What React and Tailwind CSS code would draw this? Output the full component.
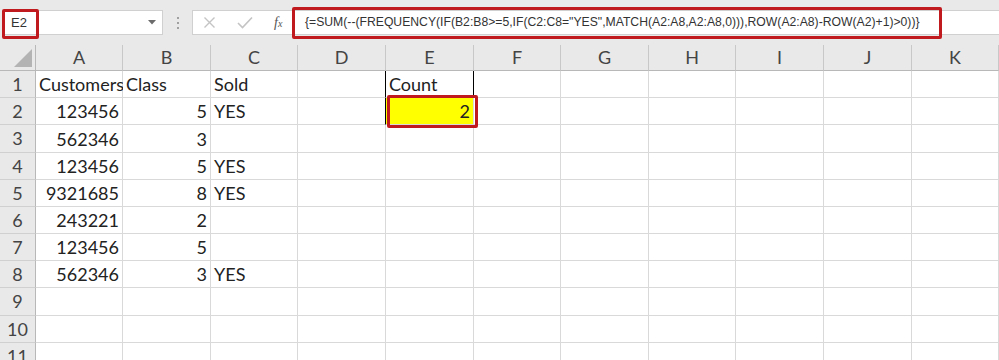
import React from "react"

const cols = [
  { name: "A", w: 87 },
  { name: "B", w: 88 },
  { name: "C", w: 87 },
  { name: "D", w: 88 },
  { name: "E", w: 88 },
  { name: "F", w: 87 },
  { name: "G", w: 88 },
  { name: "H", w: 87 },
  { name: "I", w: 88 },
  { name: "J", w: 88 },
  { name: "K", w: 87 },
]

const rowHeights = [27, 27, 28, 27, 27, 27, 27, 27, 28, 27, 27]

// cell values: [text, align]
const data = {
  1: { A: ["Customers", "l"], B: ["Class", "l"], C: ["Sold", "l"], E: ["Count", "l"] },
  2: { A: ["123456", "r"], B: ["5", "r"], C: ["YES", "l"], E: ["2", "r"] },
  3: { A: ["562346", "r"], B: ["3", "r"] },
  4: { A: ["123456", "r"], B: ["5", "r"], C: ["YES", "l"] },
  5: { A: ["9321685", "r"], B: ["8", "r"], C: ["YES", "l"] },
  6: { A: ["243221", "r"], B: ["2", "r"] },
  7: { A: ["123456", "r"], B: ["5", "r"] },
  8: { A: ["562346", "r"], B: ["3", "r"], C: ["YES", "l"] },
}

const formula =
  '{=SUM(--(FREQUENCY(IF(B2:B8>=5,IF(C2:C8="YES",MATCH(A2:A8,A2:A8,0))),ROW(A2:A8)-ROW(A2)+1)>0))}'

function Toolbar() {
  return (
    <div className="relative h-[45px] bg-[#e9e9e9] flex items-start pt-[10px] font-['Liberation_Sans',sans-serif]">
      <div className="ml-[4px] w-[159px] h-[25px] bg-white border border-[#d0d0d0] flex items-center justify-between pl-[6px] pr-[6px]">
        <span className="text-[13px] text-[#333]">E2</span>
        <svg width="8" height="5" viewBox="0 0 8 5">
          <path d="M0 0 L8 0 L4 4.5 Z" fill="#6b6b6b" />
        </svg>
      </div>
      <div className="w-[29px] h-[25px] flex flex-col items-center justify-center gap-[3px]">
        <span className="w-[2px] h-[2px] bg-[#a0a0a0]" />
        <span className="w-[2px] h-[2px] bg-[#a0a0a0]" />
        <span className="w-[2px] h-[2px] bg-[#a0a0a0]" />
      </div>
      <div className="flex-1 h-[25px] bg-white border border-[#d0d0d0] border-r-0 flex items-center">
        <div className="w-[100px] flex items-center pl-[10px] gap-[17px]">
          <svg width="13" height="13" viewBox="0 0 13 13">
            <path d="M1.5 1.5 L11.5 11.5 M11.5 1.5 L1.5 11.5" stroke="#c4c4c4" strokeWidth="1.4" />
          </svg>
          <svg width="16" height="13" viewBox="0 0 16 13" className="ml-[4px]">
            <path d="M1 7 L5.5 11.5 L15 1.5" stroke="#c4c4c4" strokeWidth="1.6" fill="none" />
          </svg>
          <span className="ml-[4px] text-[14px] italic text-[#555] font-['Liberation_Serif',serif]">
            f<span className="text-[10px]">x</span>
          </span>
        </div>
        <span className="pl-[12px] text-[12.2px] text-[#333] whitespace-nowrap">{formula}</span>
      </div>
      {/* red annotation boxes */}
      <div className="absolute left-[2px] top-[9px] w-[37px] h-[30px] border-[3px] border-[#c01a1f] rounded-[2px]" />
      <div className="absolute left-[292px] top-[7px] w-[650px] h-[32px] border-[3px] border-[#c01a1f] rounded-[2px]" />
    </div>
  )
}

function Corner() {
  return (
    <div className="w-[36px] h-[26px] bg-[#e9e9e9] border-r border-b border-[#b8b8b8] flex items-end justify-end pr-[3px] pb-[3px]">
      <svg width="18" height="18" viewBox="0 0 18 18">
        <path d="M18 0 L18 18 L0 18 Z" fill="#b3b3b3" />
      </svg>
    </div>
  )
}

function Cell({ row, col }) {
  const v = data[row] && data[row][col.name]
  const isE1 = row === 1 && col.name === "E"
  const isE2 = row === 2 && col.name === "E"
  return (
    <div
      className={`relative h-full border-b border-r border-[#d9d9d9] flex items-end pb-[1px] px-[3px] ${
        v && v[1] === "r" ? "justify-end" : "justify-start"
      } ${isE2 ? "bg-[#ffff00] z-10" : "bg-white"} ${
        isE1 || isE2 ? "border-l border-l-black -ml-px" : ""
      } ${isE1 ? "border-r-black" : ""}`}
    >
      {v && <span className="text-[18px] leading-[24px] text-[#222] whitespace-nowrap">{v[0]}</span>}
      {isE2 && (
        <div className="absolute left-[1px] -top-[3px] -right-[5px] -bottom-[4px] border-[3px] border-[#c01a1f] rounded-[2px]" />
      )}
    </div>
  )
}

export default function App() {
  return (
    <div className="w-[999px] h-[360px] overflow-hidden bg-white">
      <Toolbar />
      <div className="font-['Lato',sans-serif]">
        <div className="flex">
          <Corner />
          {cols.map((c) => (
            <div
              key={c.name}
              style={{ width: c.w }}
              className="h-[26px] bg-[#e9e9e9] border-r border-b border-r-[#c8c8c8] border-b-[#b8b8b8] flex items-center justify-center text-[18px] text-[#444]"
            >
              {c.name}
            </div>
          ))}
        </div>
        {rowHeights.map((h, i) => {
          const row = i + 1
          return (
            <div key={row} className="flex" style={{ height: h }}>
              <div className="w-[36px] h-full bg-[#e9e9e9] border-r border-b border-r-[#b8b8b8] border-b-[#d0d0d0] flex items-center justify-center text-[18px] text-[#444]">
                {row}
              </div>
              {cols.map((c) => (
                <div key={c.name} style={{ width: c.w }} className={`h-full ${row === 2 && c.name === "E" ? "relative z-10" : ""}`}>
                  <Cell row={row} col={c} />
                </div>
              ))}
            </div>
          )
        })}
      </div>
    </div>
  )
}
